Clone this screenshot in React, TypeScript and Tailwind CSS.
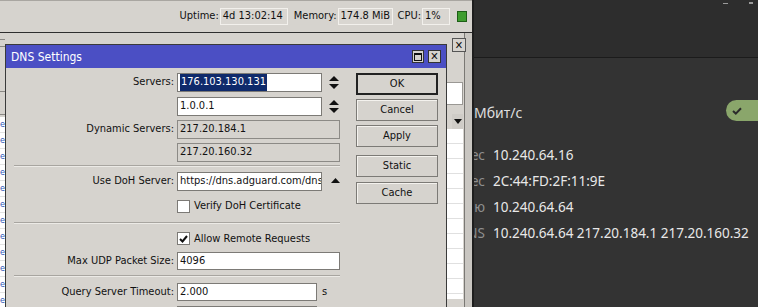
import type { ReactNode } from "react";

const win = "font-['DejaVu_Sans_Condensed','Liberation_Sans',sans-serif] text-[11px] text-[#111]";

function Field({ w, children, ro = false, h = "h-[19px]" }: { w: string; children?: ReactNode; ro?: boolean; h?: string }) {
  return (
    <div
      className={`${w} ${h} flex items-center overflow-hidden whitespace-nowrap border px-[2px] ${
        ro ? "border-[#8c8a86] bg-[#d6d3ce]" : "border-[#7c7a76] bg-white"
      }`}
    >
      {children}
    </div>
  );
}

function Row({ label, children, className = "" }: { label?: string; children: ReactNode; className?: string }) {
  return (
    <div className={`flex items-center gap-[3px] ${className}`}>
      <div className="w-[168px] shrink-0 text-right whitespace-nowrap">{label}</div>
      {children}
    </div>
  );
}

function Spin() {
  return (
    <svg width="10" height="13" viewBox="0 0 10 13" className="ml-[4px]">
      <polygon points="5,0 10,5 0,5" fill="#111" />
      <polygon points="0,8 10,8 5,13" fill="#111" />
    </svg>
  );
}

function Check({ on = false }: { on?: boolean }) {
  return (
    <div className="flex h-[13px] w-[13px] items-center justify-center border border-[#7c7a76] bg-white">
      {on && (
        <svg width="9" height="8" viewBox="0 0 9 8">
          <path d="M1 4 L3.5 6.5 L8 1" stroke="#111" strokeWidth="2" fill="none" />
        </svg>
      )}
    </div>
  );
}

function Sep({ className = "" }: { className?: string }) {
  return <div className={`ml-[8px] w-[326px] border-t border-b border-t-[#a8a5a0] border-b-[#eceae6] ${className}`} />;
}

function Btn({ label, def = false, className = "" }: { label: string; def?: boolean; className?: string }) {
  return (
    <div
      className={`flex h-[22px] w-[82px] items-center justify-center bg-[#d6d3ce] ${
        def ? "border-[2px] border-[#222]" : "border border-[#7c7a76] shadow-[inset_1px_1px_0_#f4f2ee]"
      } ${className}`}
    >
      {label}
    </div>
  );
}

function StatBox({ w, children }: { w: string; children: ReactNode }) {
  return (
    <div className={`${w} ml-[1px] flex h-[17px] items-center border border-[#f2f0ec] bg-[#d9d6d1] px-[2px] whitespace-nowrap`}>
      {children}
    </div>
  );
}

function DnsDialog() {
  return (
    <div className={`absolute left-[5px] top-[44px] h-[275px] w-[442px] border border-[#3a3a3a] bg-[#d6d3ce] ${win}`}>
      <div className="flex h-[23px] items-center justify-between bg-[#4b4fc4] pl-[5px] pr-[5px] text-[12px] text-white">
        <span>DNS Settings</span>
        <div className="flex gap-[4px]">
          <div className="flex h-[13px] w-[12px] items-center justify-center border border-[#333] bg-[#d6d3ce]">
            <div className="h-[8px] w-[8px] border border-[#111] border-t-2" />
          </div>
          <div className="flex h-[13px] w-[13px] items-center justify-center border border-[#333] bg-[#d6d3ce] text-[11px] font-bold leading-none text-[#111]">
            ✕
          </div>
        </div>
      </div>
      <div className="flex">
        <div className="flex w-[345px] flex-col">
          <Row label="Servers:" className="mt-[5px]">
            <Field w="w-[145px]">
              <span className="bg-[#0f2a6b] px-[1px] text-white">176.103.130.131</span>
            </Field>
            <Spin />
          </Row>
          <Row className="mt-[5px]">
            <Field w="w-[145px]">1.0.0.1</Field>
            <Spin />
          </Row>
          <Row label="Dynamic Servers:" className="mt-[4px]">
            <Field w="w-[163px]" ro>
              217.20.184.1
            </Field>
          </Row>
          <Row className="mt-[4px]">
            <Field w="w-[163px]" ro>
              217.20.160.32
            </Field>
          </Row>
          <Sep className="mt-[3px]" />
          <Row label="Use DoH Server:" className="mt-[5px]">
            <Field w="w-[145px]">https://dns.adguard.com/dns-query</Field>
            <svg width="9" height="5" viewBox="0 0 9 5" className="mb-[2px] ml-[6px]">
              <polygon points="4.5,0 9,5 0,5" fill="#111" />
            </svg>
          </Row>
          <Row className="mt-[7px]">
            <Check />
            <span className="ml-[1px]">Verify DoH Certificate</span>
          </Row>
          <Sep className="mt-[7px]" />
          <Row className="mt-[7px]">
            <Check on />
            <span className="ml-[1px]">Allow Remote Requests</span>
          </Row>
          <Row label="Max UDP Packet Size:" className="mt-[5px]">
            <Field w="w-[163px]" h="h-[18px]">
              4096
            </Field>
          </Row>
          <Sep className="mt-[5px]" />
          <Row label="Query Server Timeout:" className="mt-[6px]">
            <Field w="w-[140px]" h="h-[18px]">
              2.000
            </Field>
            <span className="ml-[2px]">s</span>
          </Row>
          <Row className="mt-[5px]">
            <Field w="w-[140px]" h="h-[18px]" />
          </Row>
        </div>
        <div className="ml-[5px] flex flex-col pt-[5px]">
          <Btn label="OK" def />
          <Btn label="Cancel" className="mt-[4px]" />
          <Btn label="Apply" className="mt-[4px]" />
          <Btn label="Static" className="mt-[8px]" />
          <Btn label="Cache" className="mt-[5px]" />
        </div>
      </div>
    </div>
  );
}

const net = [
  { label: "IPv4-адрес", value: "10.240.64.16" },
  { label: "Аппаратный адрес", value: "2C:44:FD:2F:11:9E" },
  { label: "Маршрут по умолчанию", value: "10.240.64.64" },
  { label: "DNS", value: "10.240.64.64 217.20.184.1 217.20.160.32" },
];

export default function App() {
  return (
    <div className="flex h-[307px] w-[758px] overflow-hidden bg-[#333333]">
      {/* winbox */}
      <div className={`relative flex w-[472px] shrink-0 flex-col bg-[#d6d3ce] ${win}`}>
        <div className="flex h-[33px] items-center justify-end border-t border-t-[#a9a6a1] border-b border-b-[#2e2e2e] pb-[1px] pr-[5px]">
          <span>Uptime:</span>
          <StatBox w="w-[68px]">4d 13:02:14</StatBox>
          <span className="ml-[6px]">Memory:</span>
          <StatBox w="w-[55px]">174.8 MiB</StatBox>
          <span className="ml-[5px]">CPU:</span>
          <StatBox w="w-[28px]">1%</StatBox>
          <div className="ml-[7px] h-[11px] w-[10px] border border-[#1d5e16] bg-[#3f9d2f]" />
        </div>
        <div className="flex flex-1">
          <div className="flex w-[5px] flex-col">
            <div className="mt-[6px] h-[8px] border-y border-[#8a8884]" />
            <div className="mt-[44px] h-[24px] border-y border-[#8a8884]" />
            <div className="mt-[2px] h-[190px] overflow-hidden bg-white text-[9px] leading-[15px] text-[#2e56b8]">
              {Array.from({ length: 12 }).map((_, i) => (
                <div key={i} className="border-b border-[#e2e2e2]">
                  e
                </div>
              ))}
            </div>
          </div>
          <div className="flex-1" />
          <div className="flex w-[17px] flex-col">
            <div className="mt-[5px] flex justify-end">
              <div className="flex h-[14px] w-[14px] translate-x-[2px] items-center justify-center border border-[#555] bg-[#d6d3ce] text-[11px] font-bold leading-none">
                ✕
              </div>
            </div>
            <div className="mt-[30px] h-[23px] w-[16px] border border-l-0 border-[#9a9894] bg-white" />
            <div className="ml-[5px] mt-[9px] flex h-[15px] w-[11px] items-center justify-center bg-[#cfccc7]">
              <svg width="8" height="5" viewBox="0 0 8 5">
                <polygon points="0,0 8,0 4,5" fill="#111" />
              </svg>
            </div>
            <div className="h-[170px] w-[16px] bg-white">
              {Array.from({ length: 11 }).map((_, i) => (
                <div key={i} className="h-[15px] border-b border-[#e0e0e0]" />
              ))}
            </div>
          </div>
          <div className="w-[8px] border-l border-[#7a7874] bg-[#c9c6c1]" />
        </div>
        <DnsDialog />
      </div>
      {/* gnome settings */}
      <div className="flex flex-1 flex-col border-l-2 border-[#1e1e1e] font-['Noto_Sans',sans-serif]">
        <div className="relative h-[58px] border-b border-[#1b1b1b] bg-[#2d2d2d]">
          <div className="absolute right-[30px] top-[3px] h-[1px] w-[5px] bg-[#9a9a9a]" />
          <div className="absolute right-[5px] top-[2px] h-[2px] w-[4px] bg-[#9a9a9a]" />
        </div>
        <div className="flex flex-1 flex-col">
          <div className="mt-[42px] flex h-[21px] items-center">
            <span className="translate-y-[2px] text-[14px] text-[#dedede]">Мбит/с</span>
            <div className="ml-auto mr-[-20px] flex h-[21px] w-[52px] items-center rounded-full bg-[#8aa66b] pl-[6px]">
              <svg width="10" height="8" viewBox="0 0 10 8">
                <path d="M1 4 L3.8 6.6 L9 1.2" stroke="#2b2b2b" strokeWidth="2" fill="none" />
              </svg>
            </div>
          </div>
          <div className="mt-[25px] flex flex-col gap-[7px] text-[13.5px] leading-[19px]">
            {net.map((r) => (
              <div key={r.label} className="flex items-center">
                <div className="flex w-[11px] justify-end overflow-hidden whitespace-nowrap text-[#8f8f8f]">{r.label}</div>
                <span className="ml-[8px] whitespace-nowrap text-[#e8e8e8]">{r.value}</span>
              </div>
            ))}
          </div>
        </div>
      </div>
    </div>
  );
}
